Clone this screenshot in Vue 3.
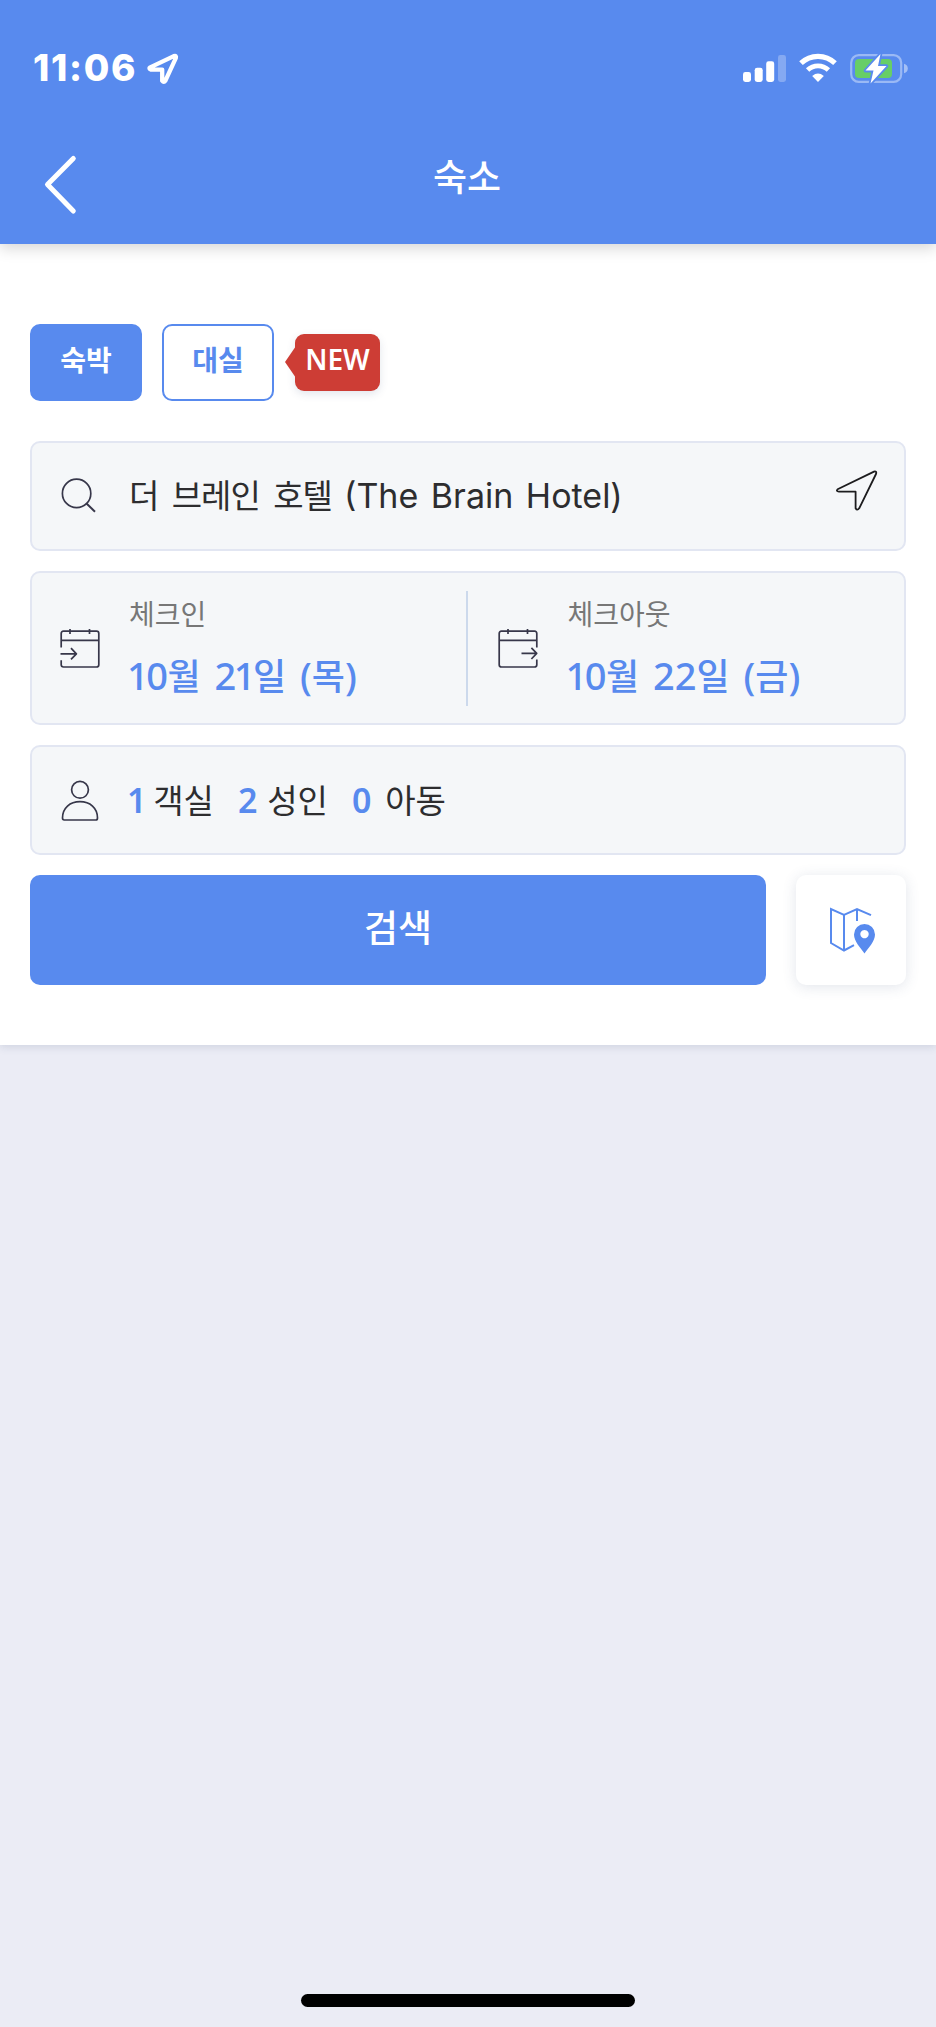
<script setup>
import { ref } from 'vue'

const stay = ref('night')
const dates = [
  { kind: 'in', label: '체크인', month: '10', day: '21', weekday: '목' },
  { kind: 'out', label: '체크아웃', month: '10', day: '22', weekday: '금' },
]
const guests = [
  { id: 'room', count: 1, label: '객실' },
  { id: 'adult', count: 2, label: '성인' },
  { id: 'child', count: 0, label: '아동' },
]
</script>

<template>
  <div class="screen">
    <header class="header">
      <div class="status">
        <span class="time">11:06</span>
        <svg class="locate" width="34" height="34" viewBox="0 0 34 34">
          <path d="M4.2 16.4 L27.8 5.1 Q30.7 4.1 29.8 7.2 L19.3 29.8 Q17.8 32 16.2 29.8 V18.6 H4.8 Q2.4 17.6 4.2 16.4 Z" fill="none" stroke="#fff" stroke-width="4.3" stroke-linejoin="round" />
        </svg>
        <div class="indicators">
          <svg width="44" height="28" viewBox="0 0 44 28" fill="#fff">
            <rect x="0" y="18" width="8" height="10" rx="2.4" />
            <rect x="11.7" y="13.8" width="8" height="14.2" rx="2.4" />
            <rect x="23.2" y="7.3" width="8" height="20.7" rx="2.4" />
            <rect x="35" y="1" width="8" height="27" rx="2.4" opacity=".27" />
          </svg>
          <svg class="wifi" width="38" height="28" viewBox="0 0 38 28" fill="none" stroke="#fff">
            <path d="M2 9.2 A24.4 24.4 0 0 1 36 9.2" stroke-width="5.2" />
            <path d="M8.6 16 A15 15 0 0 1 29.4 16" stroke-width="4.8" />
            <path d="M19 28 L13.2 22 Q19 17.2 24.8 22 Z" fill="#fff" stroke="none" />
          </svg>
          <svg class="battery" width="60" height="32" viewBox="0 0 60 32">
            <rect x="1.2" y="3.2" width="50" height="26.6" rx="7.5" fill="none" stroke="#fff" stroke-width="2.2" opacity=".4" />
            <path d="M54 11.8 Q57.8 12.8 57.8 16.5 Q57.8 20.2 54 21.2 Z" fill="#fff" opacity=".45" />
            <rect x="5" y="7" width="37" height="19" rx="4" fill="#67ce67" />
            <path d="M30.5 2 L15.5 18.6 H23.5 L20.5 31.5 L36.5 14 H28 Z" fill="#fff" stroke="#588aee" stroke-width="3.6" stroke-linejoin="round" paint-order="stroke" />
          </svg>
        </div>
      </div>
      <div class="nav">
        <svg class="back" width="40" height="62" viewBox="0 0 40 62" fill="none" stroke="#fff" stroke-width="5" stroke-linecap="round" stroke-linejoin="round">
          <path d="M33.3 4.5 L7.5 30.6 L33.3 57" />
        </svg>
        <h1>숙소</h1>
      </div>
    </header>

    <main class="panel">
      <div class="tabs">
        <button class="tab" :class="{ active: stay === 'night' }" @click="stay = 'night'">숙박</button>
        <button class="tab" :class="{ active: stay === 'hours' }" @click="stay = 'hours'">대실</button>
        <span class="new">NEW</span>
      </div>

      <section class="card search">
        <svg class="glass" width="36" height="36" viewBox="0 0 36 36" fill="none" stroke="#37374a" stroke-width="1.7">
          <circle cx="15.6" cy="15.4" r="14.2" />
          <path d="M25.5 25.5 L34 33.7" stroke-width="2" />
        </svg>
        <p class="hotel"><span class="ko">더 브레인 호텔</span><span class="en">(The Brain Hotel)</span></p>
        <svg class="nearby" width="42" height="42" viewBox="0 0 42 42" fill="none" stroke="#1c1c1e" stroke-width="1.8" stroke-linejoin="round">
          <path d="M1.6 19.3 L38 1.6 Q41 .9 40 4 L23.2 38.3 Q21.2 41 19.6 38.2 V21.7 H3 Q-.3 21.2 1.6 19.3 Z" />
        </svg>
      </section>

      <section class="card dates">
        <div v-for="d in dates" :key="d.kind" class="date" :class="d.kind">
          <svg width="42" height="42" viewBox="0 0 42 42" fill="none" stroke="#37374a" stroke-width="1.7" stroke-linejoin="round">
            <path d="M11 1 V6 M30.5 1 V6" />
            <template v-if="d.kind === 'in'">
              <path d="M2.2 19.5 V5.5 Q2.2 3.2 4.5 3.2 H37.5 Q39.8 3.2 39.8 5.5 V36.7 Q39.8 39 37.5 39 H4.5 Q2.2 39 2.2 36.7 V32.2 M2.2 12.4 H39.8" />
              <path d="M1.5 25.8 H17 M12 20.2 L17.4 25.8 L12 31.4" />
            </template>
            <template v-else>
              <path d="M39.8 19.5 V5.5 Q39.8 3.2 37.5 3.2 H4.5 Q2.2 3.2 2.2 5.5 V36.7 Q2.2 39 4.5 39 H37.5 Q39.8 39 39.8 36.7 V31.5 M2.2 12.4 H39.8" />
              <path d="M24.5 25.4 H39.3 M34.4 19.8 L39.7 25.4 L34.4 31" />
            </template>
          </svg>
          <div class="date-text">
            <span class="label">{{ d.label }}</span>
            <strong><i :class="{ tight: d.month.includes('1') }">{{ d.month }}</i><b class="month">월</b> <i :class="{ tight: d.day.includes('1') }">{{ d.day }}</i><b>일</b> (<b>{{ d.weekday }}</b>)</strong>
          </div>
        </div>
      </section>

      <section class="card guests">
        <svg class="person" width="38" height="42" viewBox="0 0 38 42" fill="none" stroke="#37374a" stroke-width="1.7" stroke-linejoin="round">
          <circle cx="19" cy="9.8" r="8.4" />
          <path d="M1.5 38 C1.5 28 9 21.7 19 21.7 S36.5 28 36.5 38 Q36.5 40 34.8 40 H3.2 Q1.5 40 1.5 38 Z" />
        </svg>
        <span v-for="g in guests" :key="g.id" class="guest" :class="g.id"><em>{{ g.count }}</em><span>{{ g.label }}</span></span>
      </section>

      <div class="actions">
        <button class="submit">검색</button>
        <button class="map" aria-label="지도">
          <svg width="50" height="50" viewBox="0 0 50 50" fill="none" stroke="#588aee" stroke-width="2">
            <path d="M18 8.8 L5 3 V37 L18 44.5 L28 39.2 M18 8.8 V44 M18 8.8 L31 3 L45 9.2 M31 3 V15" />
            <path d="M38.5 47.5 C34.5 41.5 28 35.5 28 28.5 A10.5 10.5 0 0 1 49 28.5 C49 35.5 42.5 41.5 38.5 47.5 Z M38.5 23.9 a4.2 4.2 0 1 0 .01 0 Z" fill="#588aee" fill-rule="evenodd" stroke="none" />
          </svg>
        </button>
      </div>
    </main>

    <div class="home"></div>
  </div>
</template>

<style>
body { margin: 0; background: #ebecf5; }
</style>

<style scoped>
.screen {
  display: flex;
  flex-direction: column;
  width: 936px;
  height: 2027px;
  box-sizing: border-box;
  padding-bottom: 20px;
  background: #ebecf5;
  color: #2d2d2f;
  font-family: "Noto Sans CJK KR", sans-serif;
}
svg { display: block; flex: none; overflow: visible; }
button { padding: 0; border: 0; font: inherit; }
.header {
  position: relative;
  z-index: 1;
  height: 244px;
  background: #588aee;
  color: #fff;
  box-shadow: 0 4px 14px rgba(0, 0, 0, .17);
}
.status { display: flex; align-items: center; height: 136px; padding: 0 26px 0 33px; box-sizing: border-box; }
.time { width: 102px; font: 800 37px/40px Inter, sans-serif; letter-spacing: 1.7px; white-space: nowrap; }
.locate { margin-left: 11px; }
.indicators { display: flex; align-items: center; margin-left: auto; }
.wifi { margin-left: 12px; }
.battery { margin: -1px 0 0 13px; width: 60px; }
.nav { display: grid; grid-template-columns: 80px 1fr 80px; align-items: start; }
.back { margin: 18px 0 0 40px; }
h1 { margin: 14px 2px 0 0; text-align: center; font-size: 37px; font-weight: 500; line-height: 50px; }
.panel {
  height: 801px;
  box-sizing: border-box;
  padding: 80px 30px 60px;
  background: #fff;
  box-shadow: 0 2px 8px rgba(60, 80, 120, .16);
}
.tabs { display: flex; align-items: flex-start; margin-bottom: 40px; }
.tab {
  width: 112px;
  height: 77px;
  margin-right: 20px;
  padding-bottom: 7px;
  border: 2px solid #588aee;
  border-radius: 10px;
  background: #fff;
  color: #588aee;
  font-size: 28px;
  font-weight: 700;
}
.tab.active { background: #588aee; color: #fff; }
.new {
  position: relative;
  width: 85px;
  height: 57px;
  margin: 10px 0 0 1px;
  border-radius: 9px;
  background: #cd3d35;
  color: #fff;
  font: 600 28px/50px "Noto Sans", sans-serif;
  text-align: center;
  box-shadow: 0 3px 8px rgba(60, 80, 120, .14);
}
.new::before {
  content: "";
  position: absolute;
  left: -10px;
  top: 12px;
  border: solid transparent;
  border-width: 16px 11px 16px 0;
  border-right-color: #cd3d35;
}
.card {
  display: flex;
  box-sizing: border-box;
  height: 110px;
  margin-bottom: 20px;
  border: 2px solid #e2e6f2;
  border-radius: 10px;
  background: #f5f7f9;
}
.search { align-items: center; padding: 0 26px 0 29px; }
.hotel { display: flex; flex: 1; margin: 0 0 0 32px; font-size: 33px; line-height: 48px; white-space: nowrap; }
.ko { width: 215px; letter-spacing: -1px; word-spacing: 7px; }
.en { font: 400 34px/52px Inter, sans-serif; word-spacing: 3px; }
.nearby { margin-top: -10px; }
.dates { height: 154px; }
.date { display: flex; flex: 1; align-items: flex-start; padding: 17px 0 0 27px; }
.date > svg { margin-top: 38px; }
.date.out { position: relative; padding-left: 30px; }
.date.out::before { content: ""; position: absolute; left: -1px; top: 18px; width: 2px; height: 115px; background: #ccd9ec; }
.date-text { display: flex; flex-direction: column; margin-left: 28px; }
.out .date-text { margin-left: 29px; }
.label { color: #777; font-size: 28px; line-height: 46px; }
strong { font: 500 38px/50px "Noto Sans", sans-serif; color: #588aee; margin: 13px 0 0 -2px; word-spacing: 4px; white-space: nowrap; }
strong b { font: 500 36px/50px "Noto Sans CJK KR", sans-serif; }
strong .month { margin-left: 2px; }
strong i { font-style: normal; }
strong i.tight { letter-spacing: -2.5px; }
.guests { align-items: center; padding-left: 29px; font-size: 33px; }
.person { margin: 1px 31px 0 0; }
.guest { display: flex; align-items: baseline; width: 108px; margin-top: -1px; line-height: 48px; letter-spacing: -.1px; }
.guest.adult { width: 114px; }
em { color: #588aee; font: 600 34px/48px "Noto Sans", sans-serif; margin-right: 10px; }
.room em { margin: 0 7px 0 -3px; }
.child em { margin-right: 14px; }
.actions { display: flex; justify-content: space-between; }
.submit { width: 736px; height: 110px; padding-bottom: 8px; border-radius: 10px; background: #588aee; color: #fff; font-size: 37px; font-weight: 500; }
.map { display: grid; place-items: center; width: 110px; height: 110px; border-radius: 10px; background: #fff; box-shadow: 0 2px 14px rgba(60, 80, 120, .15); }
.map svg { margin-top: 1px; }
.home { width: 334px; height: 13px; margin: auto auto 0; border-radius: 7px; background: #000; }
</style>
